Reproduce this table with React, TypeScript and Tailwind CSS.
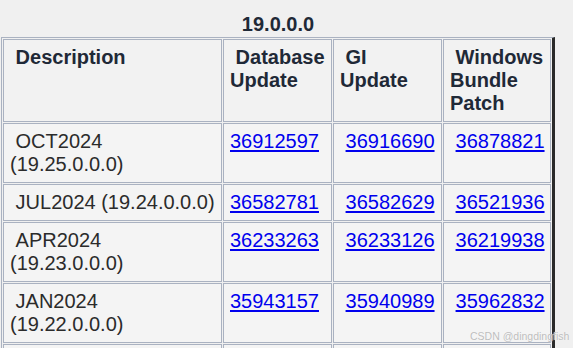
const rows = [
  { desc: ["OCT2024", "(19.25.0.0.0)"], db: "36912597", gi: "36916690", win: "36878821" },
  { desc: ["JUL2024 (19.24.0.0.0)"], db: "36582781", gi: "36582629", win: "36521936" },
  { desc: ["APR2024", "(19.23.0.0.0)"], db: "36233263", gi: "36233126", win: "36219938" },
  { desc: ["JAN2024", "(19.22.0.0.0)"], db: "35943157", gi: "35940989", win: "35962832" },
];

const th = "border border-[#aab2c1] bg-[#f2f2f2] px-[6px] py-[6px] text-left align-top font-bold text-[#1f2937]";
const td = "border border-[#aab2c1] bg-[#f4f4f4] px-[6px] py-[6px] text-left align-top";

const Cell = ({ id, lead }: { id: string; lead?: boolean }) => (
  <td className={`${td} whitespace-nowrap`}>
    {lead && "\u00a0"}
    <a href="#" className="text-[#0000ee] underline underline-offset-[2px]">
      {id}
    </a>
  </td>
);

export default function App() {
  return (
    <div className="relative w-[573px] h-[348px] overflow-hidden bg-[#f0f0f0] font-['Liberation_Sans',Arial,sans-serif] text-[20px] leading-[23px] text-[#2b2b2b]">
      <div className="pt-[13px] pl-[1px]">
        <table className="w-[554px] table-fixed border-separate border-spacing-[1px] border-t border-l border-t-[#aab2c1] border-l-[#aab2c1] border-r-[3px] border-r-[#2a2a2a]">
          <caption className="font-bold text-[#1f2937] leading-[23px] pb-[1px]">19.0.0.0</caption>
          <thead>
            <tr>
              <th className={`${th} w-[219px]`}>{"\u00a0"}Description</th>
              <th className={`${th} w-[109px]`}>
                {"\u00a0"}Database
                <br />
                Update
              </th>
              <th className={`${th} w-[109px]`}>
                {"\u00a0"}GI
                <br />
                Update
              </th>
              <th className={`${th} w-[108px]`}>
                {"\u00a0"}Windows
                <br />
                Bundle
                <br />
                Patch
              </th>
            </tr>
          </thead>
          <tbody>
            {rows.map((r) => (
              <tr key={r.db}>
                <td className={`${td} whitespace-nowrap`}>
                  {"\u00a0"}
                  {r.desc[0]}
                  {r.desc[1] && (
                    <>
                      <br />
                      {r.desc[1]}
                    </>
                  )}
                </td>
                <Cell id={r.db} />
                <Cell id={r.gi} lead />
                <Cell id={r.win} lead />
              </tr>
            ))}
            <tr>
              <td className={`${td} h-[60px]`} />
              <td className={`${td} h-[60px]`} />
              <td className={`${td} h-[60px]`} />
              <td className={`${td} h-[60px]`} />
            </tr>
          </tbody>
        </table>
      </div>
      <div className="absolute left-[470px] top-[329px] text-[10.5px] leading-[14px] text-[#bdbdbd] [text-shadow:0_0_1px_#ffffff]">
        CSDN @dingdingfish
      </div>
    </div>
  );
}
